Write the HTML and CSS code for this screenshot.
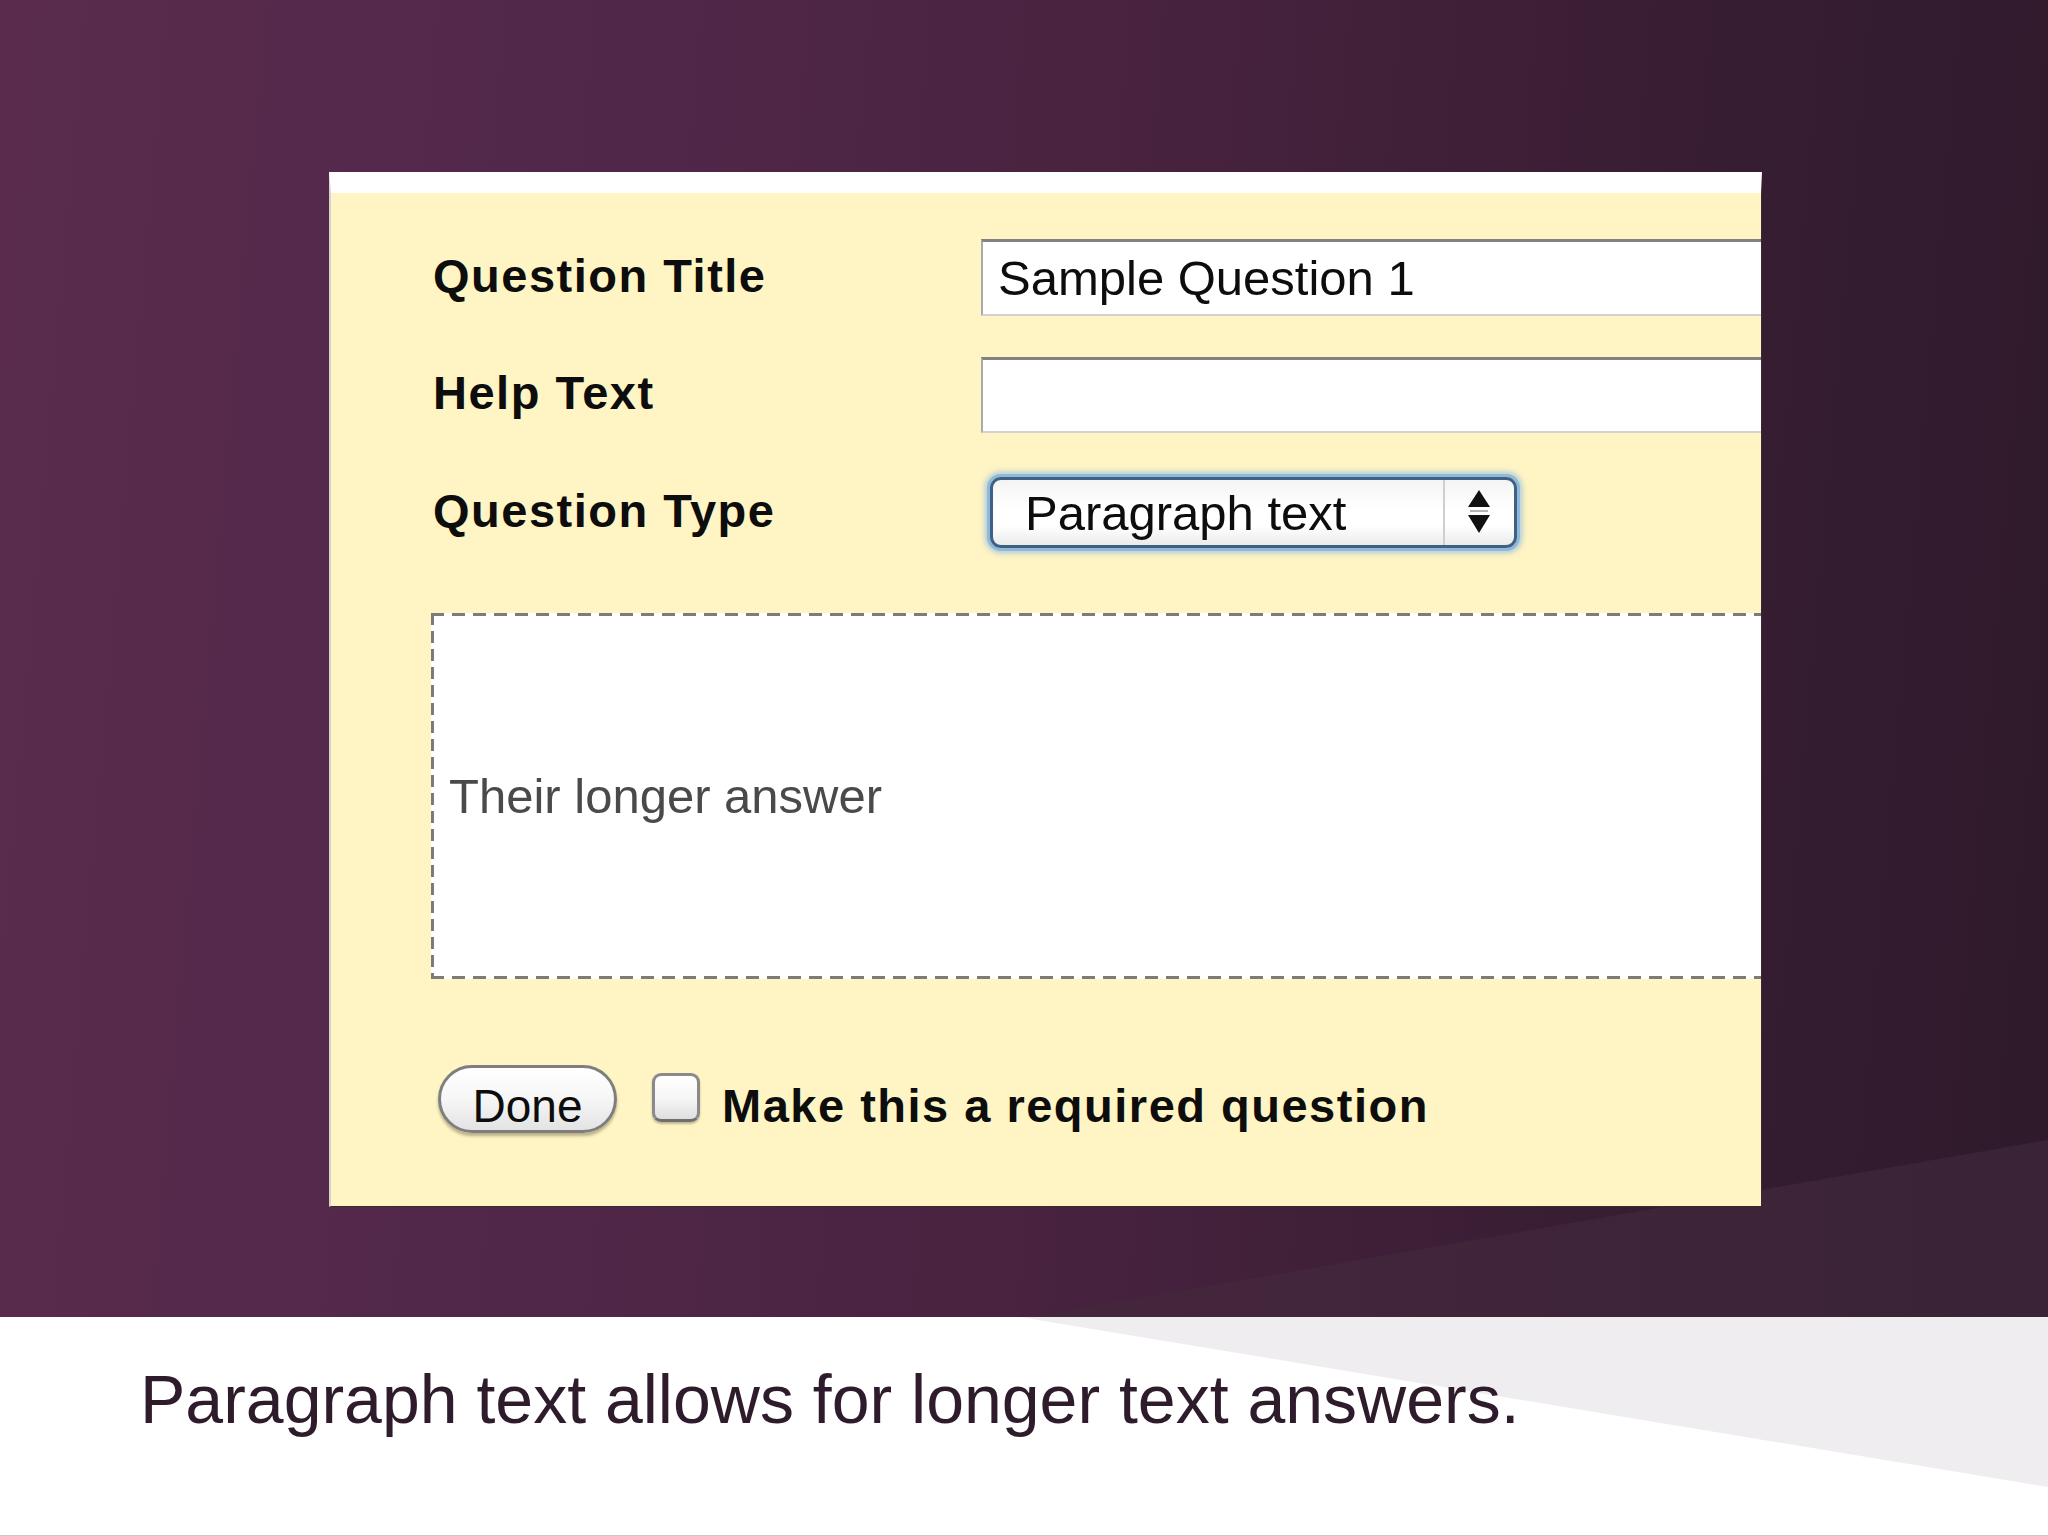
FILE: index.html
```html
<!DOCTYPE html>
<html>
<head>
<meta charset="utf-8">
<link rel="stylesheet" href="styles.css">
</head>
<body>
<div class="slide">
  <section class="stage">
    <div class="stage-band"></div>
    <div class="panel">
      <div class="form">
        <div class="row row-title">
          <div class="label">Question Title</div>
          <input class="field" type="text" value="Sample Question 1">
        </div>
        <div class="row row-help">
          <div class="label">Help Text</div>
          <input class="field" type="text" value="">
        </div>
        <div class="row row-type">
          <div class="label">Question Type</div>
          <div class="select">
            <span class="select-text">Paragraph text</span>
            <span class="select-arrows">
              <svg width="68" height="65" viewBox="0 0 68 65">
                <polygon points="34,10 23,27 45,27" fill="#111"/>
                <line x1="25" y1="31" x2="43" y2="31" stroke="#b5b5b5" stroke-width="2"/>
                <polygon points="23,35 45,35 34,53" fill="#111"/>
              </svg>
            </span>
          </div>
        </div>
        <div class="answer">
          <span class="answer-text">Their longer answer</span>
        </div>
        <div class="actions">
          <div class="btn">Done</div>
          <div class="check"></div>
          <div class="check-label">Make this a required question</div>
        </div>
      </div>
    </div>
  </section>
  <section class="caption">
    <div class="caption-shade"></div>
    <p class="caption-text">Paragraph text allows for longer text answers.</p>
  </section>
</div>
</body>
</html>
```

FILE: styles.css
```css
html, body {
  margin: 0;
  padding: 0;
}
body {
  width: 2048px;
  height: 1536px;
  overflow: hidden;
  font-family: "Liberation Sans", Arial, sans-serif;
}
.slide {
  width: 2048px;
  height: 1536px;
  display: flex;
  flex-direction: column;
}
.stage {
  position: relative;
  height: 1317px;
  box-sizing: border-box;
  padding: 172px 0 0 329px;
  background: linear-gradient(95deg, #5a2b4d 0%, #52284a 25%, #4a2341 50%, #3a1e34 75%, #2e1a2b 100%);
  overflow: hidden;
}
.stage-band {
  position: absolute;
  left: 0;
  top: 0;
  width: 2048px;
  height: 1317px;
  background: linear-gradient(90deg, #4a2841 0%, #43263b 60%, #3a2336 100%);
  clip-path: polygon(1032px 1317px, 2048px 1140px, 2048px 1317px);
}
.panel {
  position: relative;
  width: 1433px;
  height: 1035px;
  box-sizing: border-box;
  background: #fef4c4;
  border-top: 21px solid #ffffff;
  border-left: 2px solid #d8d2c8;
  border-right: 1px solid #3a2832;
  border-bottom: 1px solid #3a2832;
  overflow: hidden;
}
.form {
  display: flex;
  flex-direction: column;
  padding-left: 102px;
}
.row {
  display: flex;
  align-items: center;
}
.row-title {
  margin-top: 46px;
  height: 77px;
}
.row-help {
  margin-top: 41px;
  height: 76px;
}
.row-type {
  margin-top: 44px;
  height: 71px;
}
.label {
  width: 548px;
  flex: none;
  padding-bottom: 5px;
  font-weight: bold;
  font-size: 47px;
  letter-spacing: 1.5px;
  color: #0d0d0d;
}
.field {
  flex: none;
  width: 820px;
  height: 100%;
  box-sizing: border-box;
  margin: 0;
  padding: 0 0 0 15px;
  background: #ffffff;
  border: none;
  border-top: 3px solid #818181;
  border-left: 2px solid #aaaaaa;
  border-bottom: 2px solid #d2d2d2;
  font-family: "Liberation Sans", Arial, sans-serif;
  font-size: 49px;
  color: #0d0d0d;
  outline: none;
}
.select {
  flex: none;
  margin-left: 9px;
  width: 527px;
  height: 71px;
  box-sizing: border-box;
  border: 3px solid #3f6181;
  border-radius: 11px;
  background: linear-gradient(180deg, #f4f4f4 0%, #ffffff 45%, #ffffff 70%, #ebebeb 100%);
  box-shadow: 0 0 0 3px #8fb8dd, 0 0 4px 6px rgba(140, 185, 225, 0.55);
  display: flex;
  align-items: center;
}
.select-text {
  flex: 1;
  padding-left: 32px;
  font-size: 49px;
  color: #0d0d0d;
}
.select-arrows {
  flex: none;
  width: 71px;
  height: 65px;
  box-sizing: border-box;
  border-left: 2px solid #cfcfcf;
  display: flex;
}
.answer {
  margin-top: 65px;
  margin-left: -2px;
  width: 1340px;
  height: 366px;
  box-sizing: border-box;
  padding-left: 18px;
  background-color: #ffffff;
  background-image:
    repeating-linear-gradient(90deg, #7b7b7b 0 13px, transparent 13px 21px),
    repeating-linear-gradient(90deg, #7b7b7b 0 13px, transparent 13px 21px),
    repeating-linear-gradient(180deg, #7b7b7b 0 12px, transparent 12px 18px);
  background-size: 100% 3px, 100% 3px, 3px 100%;
  background-position: 0 0, 0 100%, 0 0;
  background-repeat: no-repeat;
  display: flex;
  align-items: center;
}
.answer-text {
  font-size: 49px;
  color: #4a4a4a;
}
.actions {
  margin-top: 86px;
  display: flex;
  align-items: flex-start;
}
.btn {
  margin-left: 5px;
  width: 179px;
  height: 68px;
  box-sizing: border-box;
  padding-top: 13px;
  border: 3px solid #7e7e7e;
  border-radius: 34px;
  background: linear-gradient(180deg, #ffffff 0%, #f6f6f6 50%, #e3e3e3 100%);
  box-shadow: 0 3px 3px rgba(60, 50, 30, 0.35);
  display: flex;
  align-items: center;
  justify-content: center;
  font-size: 46px;
  color: #0d0d0d;
}
.check {
  margin-left: 35px;
  margin-top: 8px;
  width: 48px;
  height: 49px;
  box-sizing: border-box;
  border: 3px solid #8a8a8a;
  border-bottom-color: #6f6f6f;
  border-radius: 9px;
  background: linear-gradient(180deg, #ffffff 0%, #f5f5f5 55%, #dedede 100%);
  box-shadow: 0 2px 2px rgba(60, 50, 30, 0.3);
}
.check-label {
  margin-left: 22px;
  margin-top: 14px;
  font-weight: bold;
  font-size: 47px;
  line-height: 54px;
  letter-spacing: 1.5px;
  color: #0d0d0d;
}
.caption {
  position: relative;
  height: 219px;
  box-sizing: border-box;
  background: #ffffff;
  border-bottom: 1px solid #c8c8c8;
  overflow: hidden;
}
.caption-shade {
  position: absolute;
  left: 0;
  top: 0;
  width: 2048px;
  height: 219px;
  background: #efedf0;
  clip-path: polygon(1020px 0, 2048px 0, 2048px 170px);
}
.caption-text {
  position: relative;
  margin: 0;
  padding: 43px 0 0 140px;
  font-size: 68px;
  color: #2e1b2b;
}
```
